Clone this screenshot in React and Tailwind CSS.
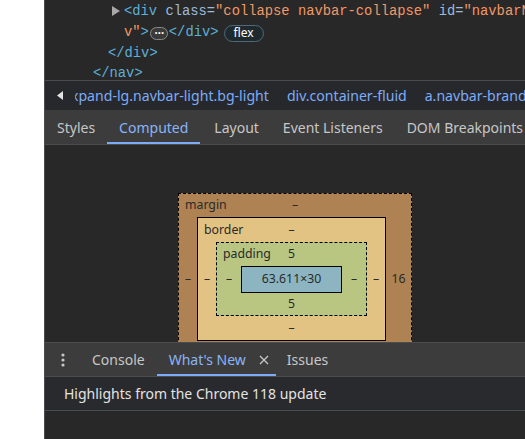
import React from 'react';

const mono = { fontFamily: '"Liberation Mono", "DejaVu Sans Mono", monospace' };

const Dash = ({ className = '' }) => <span className={className}>–</span>;

const BoxModel = () => (
  // margin box
  <div className="ml-[133px] w-[234px] border border-dashed border-black bg-[#ae8252] text-[12.3px] text-[#2a2a2a]">
    <div className="grid h-[23px] grid-cols-[1fr_auto_1fr] items-center px-[6px]">
      <span>margin</span>
      <Dash />
      <span />
    </div>
    <div className="flex items-center">
      <div className="flex w-[18px] justify-center"><Dash /></div>

      {/* border box */}
      <div className="w-[189px] border border-black bg-[#e3c383]">
        <div className="grid h-[24px] grid-cols-[1fr_auto_1fr] items-center px-[6px]">
          <span>border</span>
          <Dash />
          <span />
        </div>
        <div className="flex items-center">
          <div className="flex w-[18px] justify-center"><Dash /></div>

          {/* padding box */}
          <div className="w-[151px] border border-dashed border-black bg-[#b8c682]">
            <div className="grid h-[23px] grid-cols-[1fr_auto_1fr] items-center px-[6px]">
              <span>padding</span>
              <span>5</span>
              <span />
            </div>
            <div className="flex items-center">
              <div className="flex w-[24px] justify-center"><Dash /></div>
              <div className="flex h-[27px] w-[101px] items-center justify-center border border-black bg-[#8cb5c1]">
                63.611×30
              </div>
              <div className="flex w-[24px] justify-center"><Dash /></div>
            </div>
            <div className="flex h-[22px] items-center justify-center">5</div>
          </div>

          <div className="flex w-[18px] justify-center"><Dash /></div>
        </div>
        <div className="flex h-[24px] items-center justify-center"><Dash /></div>
      </div>

      <div className="flex w-[25px] justify-center">16</div>
    </div>
    <div className="flex h-[23px] items-center justify-center"><Dash /></div>
  </div>
);

export default function App() {
  return (
    <div
      className="flex h-[439px] w-[525px] overflow-hidden bg-white"
      style={{ fontFamily: '"Noto Sans", "Open Sans", sans-serif' }}
    >
      <div className="w-[44px] shrink-0 bg-white" />
      <div className="w-px shrink-0 bg-[#4a4c50]" />

      <div className="flex min-w-0 flex-1 flex-col bg-[#282828]">
        {/* DOM tree */}
        <div className="h-[80px] shrink-0 overflow-hidden whitespace-nowrap pt-[2px] text-[13.8px] leading-[20.8px]" style={mono}>
          <div className="pl-[67px]">
            <svg width="8" height="10" viewBox="0 0 8 10" className="mr-[4px] inline-block align-[-1px]">
              <path d="M0 0 L8 5 L0 10 Z" fill="#a8a8a8" />
            </svg>
            <span className="text-[#5db0d7]">&lt;div</span>
            <span className="text-[#9bbbdc]">&nbsp;class</span>
            <span className="text-[#9bbbdc]">=</span>
            <span className="text-[#f29766]">"collapse navbar-collapse"</span>
            <span className="text-[#9bbbdc]">&nbsp;id</span>
            <span className="text-[#9bbbdc]">=</span>
            <span className="text-[#f29766]">"navbarNav</span>
          </div>
          <div className="flex items-center pl-[79px]">
            <span className="text-[#f29766]">v"</span>
            <span className="text-[#5db0d7]">&gt;</span>
            <span className="mx-[1px] flex h-[13px] w-[18px] items-center justify-center rounded-full border border-[#8a8a8a] bg-[#3a3a3a] text-[7px] leading-none tracking-[-1px] text-white">
              •••
            </span>
            <span className="text-[#5db0d7]">&lt;/div&gt;</span>
            <span
              className="ml-[5px] flex h-[17px] items-center rounded-full border border-[#4e6a78] bg-[#1f2a2f] px-[9px] text-[12px] leading-none text-white"
              style={{ fontFamily: '"Noto Sans", sans-serif' }}
            >
              flex
            </span>
          </div>
          <div className="pl-[63px] text-[#5db0d7]">&lt;/div&gt;</div>
          <div className="pl-[48px] text-[#5db0d7]">&lt;/nav&gt;</div>
        </div>

        {/* breadcrumbs */}
        <div className="flex h-[30px] shrink-0 items-center overflow-hidden whitespace-nowrap border-t border-[#4a4c50] bg-[#27282c] text-[14.1px] text-[#7cacf8]">
          <svg width="6" height="9" viewBox="0 0 6 9" className="ml-[12px] mr-[12px] shrink-0">
            <path d="M6 0 L0 4.5 L6 9 Z" fill="#e3e3e3" />
          </svg>
          <div className="shrink-0 overflow-hidden">
            <span className="-ml-[4px] block">xpand-lg.navbar-light.bg-light</span>
          </div>
          <span className="ml-[18px] shrink-0">div.container-fluid</span>
          <span className="ml-[18px] shrink-0">a.navbar-brand</span>
        </div>

        {/* sidebar tabs */}
        <div className="flex h-[35px] shrink-0 items-stretch border-b border-[#4a4c50] bg-[#3c3c3c] text-[14px] text-[#c7c7c7] whitespace-nowrap">
          <div className="flex items-center px-[12px]">Styles</div>
          <div className="flex items-center border-b-2 border-[#7cacf8] px-[12px] pt-[2px] text-[#8ab4f8]">Computed</div>
          <div className="flex items-center pl-[14px] pr-[12px]">Layout</div>
          <div className="flex items-center px-[12px]">Event Listeners</div>
          <div className="flex items-center px-[12px]">DOM Breakpoints</div>
        </div>

        {/* computed pane */}
        <div className="h-[197px] shrink-0 overflow-hidden pt-[48px]">
          <BoxModel />
        </div>

        {/* drawer tabs */}
        <div className="flex h-[35px] shrink-0 items-stretch border-t border-b border-[#4a4c50] bg-[#3c3c3c] text-[14px] text-[#c7c7c7] whitespace-nowrap">
          <div className="flex w-[35px] items-center justify-center">
            <svg width="4" height="14" viewBox="0 0 4 14" fill="#c7c7c7">
              <circle cx="2" cy="2" r="1.6" />
              <circle cx="2" cy="7" r="1.6" />
              <circle cx="2" cy="12" r="1.6" />
            </svg>
          </div>
          <div className="flex items-center px-[12px]">Console</div>
          <div className="flex items-center gap-[13px] border-b-2 border-[#7cacf8] pl-[12px] pr-[7px] pt-[2px] text-[#8ab4f8]">
            What's New
            <svg width="10" height="10" viewBox="0 0 10 10" stroke="#c7c7c7" strokeWidth="1.3">
              <path d="M1 1 L9 9 M9 1 L1 9" />
            </svg>
          </div>
          <div className="flex items-center px-[11px]">Issues</div>
        </div>

        {/* what's new header */}
        <div className="flex h-[34px] shrink-0 items-center border-b border-[#4a4c50] bg-[#292a2d] pl-[19px] text-[14px] text-[#e3e3e3]">
          Highlights from the Chrome 118 update
        </div>
        <div className="flex-1" />
      </div>
    </div>
  );
}
